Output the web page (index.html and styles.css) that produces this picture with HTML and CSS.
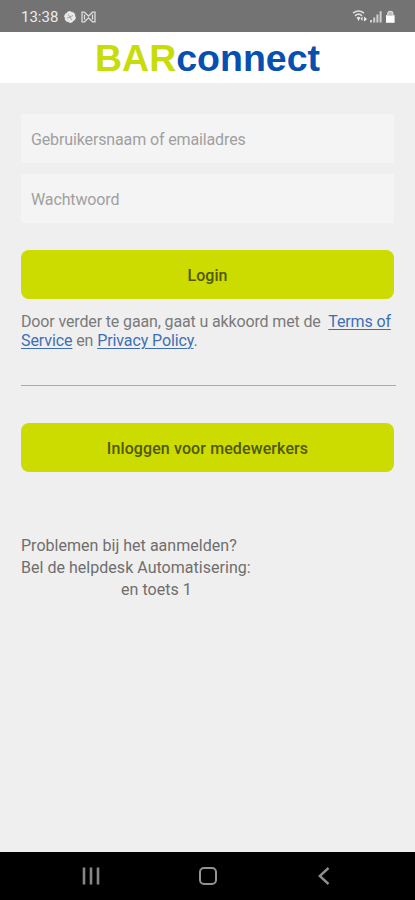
FILE: index.html
```html
<!DOCTYPE html>
<html lang="nl">
<head>
<meta charset="utf-8">
<meta name="viewport" content="width=device-width, initial-scale=1">
<title>BARconnect</title>
<link rel="stylesheet" href="styles.css">
</head>
<body>
<div class="status">
  <span class="time">13:38</span>
  <svg class="pinwheel" width="12" height="12" viewBox="0 0 12 12"><circle cx="6" cy="6" r="5.400" fill="#e8e8e8" stroke="#e8e8e8" stroke-dasharray="3.500 2"/><path d="M6 6 4 3.200M6 6l3-1.500M6 6l1.700 3M6 6l-3 1.300" stroke="#999" stroke-width=".9"/></svg>
  <svg class="mail" width="15" height="12" viewBox="0 0 15 12" fill="none" stroke="#dcdcdc" stroke-width="1.300"><path d="M1 1.200h2.500l4 4 4-4H14v9.600h-2.500l-4-4-4 4H1zM3.500 3.500v5M11.500 3.500v5"/></svg>
  <span class="spacer"></span>
  <svg class="signals" width="44" height="14" viewBox="0 0 44 14"><g fill="none" stroke="#dedede" stroke-width="1.600"><path d="M1 3.200Q6.500-1.200 12 3.200M3 5.800Q6.500 2.600 10 5.800M5 8Q6.500 6.900 8 8"/></g><path d="M5 8h3L6.500 11zM8.500 8.700l2-2.200v4.400zM12 6.500l3 2.700-3 2.200z" fill="#eee"/><path d="M18 10h2v2.500h-2zM21.200 7.500h2v5h-2zM24.400 4.500h2v8h-2zM27.600 1.200h2v11.300h-2z" fill="#d0d0d0"/><path d="M34 5.200h8.600v7.600H34z" fill="#fff"/><path d="M35.800 5.500V3.800a2.500 2.500 0 0 1 5 0v1.700" fill="#bbb" stroke="#ddd" stroke-width="1.300"/></svg>
</div>
<header class="brand"><span class="bar">BAR</span><span class="connect">connect</span></header>
<main>
  <input class="field" type="text" placeholder="Gebruikersnaam of emailadres">
  <input class="field" type="password" placeholder="Wachtwoord">
  <button class="button login">Login</button>
  <p class="terms">Door verder te gaan, gaat u akkoord met de &nbsp;<a href="#">Terms of</a><br><span class="second"><a href="#">Service</a> en <a href="#">Privacy Policy</a>.</span></p>
  <hr>
  <button class="button staff">Inloggen voor medewerkers</button>
  <div class="help">
    <div>Problemen bij het aanmelden?</div>
    <div>Bel de helpdesk Automatisering:</div>
    <div class="key">en toets 1</div>
  </div>
</main>
<nav>
  <svg width="18" height="18" viewBox="0 0 18 18" stroke="#868686" stroke-width="2.600"><path d="M2 .5v17M9 .5v17M16 .5v17"/></svg>
  <svg width="18" height="18" viewBox="0 0 18 18" fill="none" stroke="#929292" stroke-width="2"><rect x="1" y="1" width="16" height="16" rx="4"/></svg>
  <svg width="18" height="18" viewBox="0 0 18 18" fill="none" stroke="#8d8d8d" stroke-width="2.400"><path d="M13.500 1 4.800 9l8.700 8"/></svg>
</nav>
</body>
</html>
```
FILE: styles.css
```css
* { box-sizing: border-box; }
body {
  margin: 0;
  height: 900px;
  display: flex;
  flex-direction: column;
  background: #efefef;
  font-family: Roboto, "Liberation Sans", sans-serif;
  font-size: 16px;
  color: #7a7a7a;
  overflow: hidden;
}
.status {
  height: 32px;
  padding: 2px 19px 0 21px;
  display: flex;
  align-items: center;
  background: #737373;
  color: #ececec;
}
.time { font-size: 15px; }
.pinwheel { margin-left: 6px; }
.mail { margin-left: 5px; }
.spacer { flex: 1; }
.brand {
  height: 51px;
  background: #fff;
  text-align: center;
  white-space: nowrap;
  font: bold 37.5px/52px "Liberation Sans", sans-serif;
}
.bar { color: #c8dc0a; }
.connect { color: #0650b0; }
main {
  flex: 1;
  padding: 31px 21px 0;
  display: flex;
  flex-direction: column;
}
.field {
  height: 49px;
  margin: 0 0 11px;
  padding: 2px 10px 0;
  border: 0;
  background: #f4f4f4;
  font: inherit;
  letter-spacing: -.13px;
  outline: 0;
}
.field::placeholder { color: #a0a0a0; opacity: 1; }
.button {
  height: 49px;
  border: 0;
  border-radius: 8px;
  background: #ccdc00;
  color: #515800;
  font: 500 16px/49px Roboto, sans-serif;
  padding: 1px 0 0;
}
.login { margin-top: 16px; }
.staff { letter-spacing: .11px; }
.terms { margin: 13px 0 0; line-height: 19px; white-space: nowrap; letter-spacing: -.14px; }
.second { letter-spacing: -.1px; }
a { color: #3e6fb5; text-underline-offset: 2px; text-decoration-thickness: 1px; }
hr { width: 375px; height: 1px; margin: 35px 0 37px; border: 0; background: #aaa; }
.help { margin-top: 63px; line-height: 22px; color: #6e6e6e; letter-spacing: .03px; }
.key { padding-left: 100px; }
nav {
  height: 48px;
  display: flex;
  justify-content: space-between;
  align-items: center;
  padding: 0 82px;
  background: #000;
}
```
